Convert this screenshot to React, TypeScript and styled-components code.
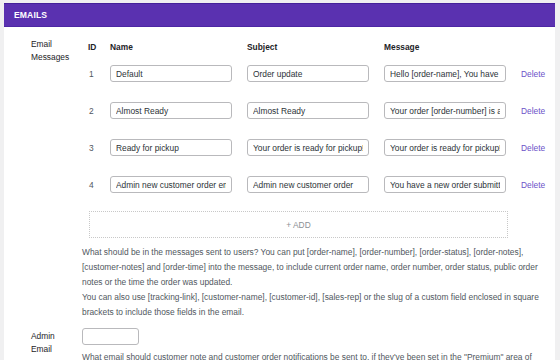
import React from 'react';
import styled, {createGlobalStyle} from "styled-components";

const GlobalStyle = createGlobalStyle`
  body {
    margin: 0;
    background: #f0f0f1;
    font-family: "Liberation Sans", Arial, sans-serif;
    font-size: 8.4px;
    color: #1d2327;
  }
`

const emails = [
    {id: 1, name: "Default", subject: "Order update", message: "Hello [order-name], You have an update on your order"},
    {id: 2, name: "Almost Ready", subject: "Almost Ready", message: "Your order [order-number] is almost ready"},
    {id: 3, name: "Ready for pickup", subject: "Your order is ready for pickup!", message: "Your order is ready for pickup!"},
    {id: 4, name: "Admin new customer order email", subject: "Admin new customer order", message: "You have a new order submitted by a customer"},
];

function App() {
    return (
        <>
            <GlobalStyle/>
            <Page>
                <Panel>
                    <Header>EMAILS</Header>
                    <Body>
                        <FieldRow>
                            <Label>Email<br/>Messages</Label>
                            <div>
                                <Table>
                                    <HeadCell>ID</HeadCell>
                                    <HeadCell>Name</HeadCell>
                                    <HeadCell>Subject</HeadCell>
                                    <HeadCell>Message</HeadCell>
                                    <HeadCell/>
                                    {emails.map(e => (
                                        <React.Fragment key={e.id}>
                                            <IdCell>{e.id}</IdCell>
                                            <Cell><TextInput readOnly defaultValue={e.name}/></Cell>
                                            <Cell><TextInput readOnly defaultValue={e.subject}/></Cell>
                                            <Cell><TextInput readOnly defaultValue={e.message}/></Cell>
                                            <Cell><DeleteLink>Delete</DeleteLink></Cell>
                                        </React.Fragment>
                                    ))}
                                </Table>
                                <AddBox>+ ADD</AddBox>
                                <Description>
                                    What should be in the messages sent to users? You can put [order-name], [order-number], [order-status], [order-notes],<br/>
                                    [customer-notes] and [order-time] into the message, to include current order name, order number, order status, public order<br/>
                                    notes or the time the order was updated.<br/>
                                    You can also use [tracking-link], [customer-name], [customer-id], [sales-rep] or the slug of a custom field enclosed in square<br/>
                                    brackets to include those fields in the email.
                                </Description>
                            </div>
                        </FieldRow>
                        <FieldRow second>
                            <Label offset>Admin<br/>Email</Label>
                            <div>
                                <SmallInput readOnly defaultValue=""/>
                                <Description tight>
                                    What email should customer note and customer order notifications be sent to, if they've been set in the "Premium" area of
                                </Description>
                            </div>
                        </FieldRow>
                    </Body>
                </Panel>
            </Page>
        </>
    );
}

const Page = styled.div`
  padding: 3px 5px 0 4px;
  height: 357px;
  overflow: hidden;
`

const Panel = styled.div`
  background: #fff;
  min-height: 100%;
`

const Header = styled.div`
  height: 24px;
  box-sizing: border-box;
  display: flex;
  align-items: center;
  padding-left: 10px;
  background: #5a31b0;
  border-top: 1px solid #45219a;
  border-bottom: 1px solid #4d27a4;
  color: #fff;
  font-weight: 700;
  font-size: 8.6px;
  letter-spacing: 0.1px;
`

const Body = styled.div`
  padding-top: 11px;
`

const FieldRow = styled.div<{ second?: boolean }>`
  display: grid;
  grid-template-columns: 51px 1fr;
  padding-left: 27px;
  margin-top: ${props => props.second ? "8px" : "0"};
`

const Label = styled.div<{ offset?: boolean }>`
  line-height: 13px;
  color: #1d2327;
  padding-top: ${props => props.offset ? "2px" : "0"};
`

const Table = styled.div`
  display: grid;
  grid-template-columns: 22px 137px 137px 137px auto;
  grid-template-rows: 17px repeat(4, 37px);
  margin-left: 6px;
`

const HeadCell = styled.div`
  display: flex;
  align-items: center;
  font-weight: 700;
  color: #1d2327;
`

const Cell = styled.div`
  display: flex;
  align-items: center;
`

const IdCell = styled(Cell)`
  padding-left: 1px;
  color: #50575e;
`

const TextInput = styled.input`
  width: 122px;
  height: 17px;
  box-sizing: border-box;
  margin: 0;
  padding: 0 5px;
  border: 1px solid #b9b9bc;
  border-radius: 3px;
  background: #fff;
  font-family: inherit;
  font-size: 8.4px;
  color: #2c3338;
  outline: none;
`

const SmallInput = styled(TextInput)`
  width: 57px;
  display: block;
`

const DeleteLink = styled.span`
  color: #6b52c8;
  cursor: pointer;
`

const AddBox = styled.div`
  margin: 8px 0 0 7px;
  width: 419px;
  height: 27px;
  box-sizing: border-box;
  border: 1px dotted #c8c8c8;
  display: flex;
  align-items: center;
  justify-content: center;
  color: #8c8f94;
`

const Description = styled.p<{ tight?: boolean }>`
  margin: ${props => props.tight ? "5px" : "7px"} 0 0;
  line-height: 15px;
  color: #50575e;
  white-space: nowrap;
`

export default App;
